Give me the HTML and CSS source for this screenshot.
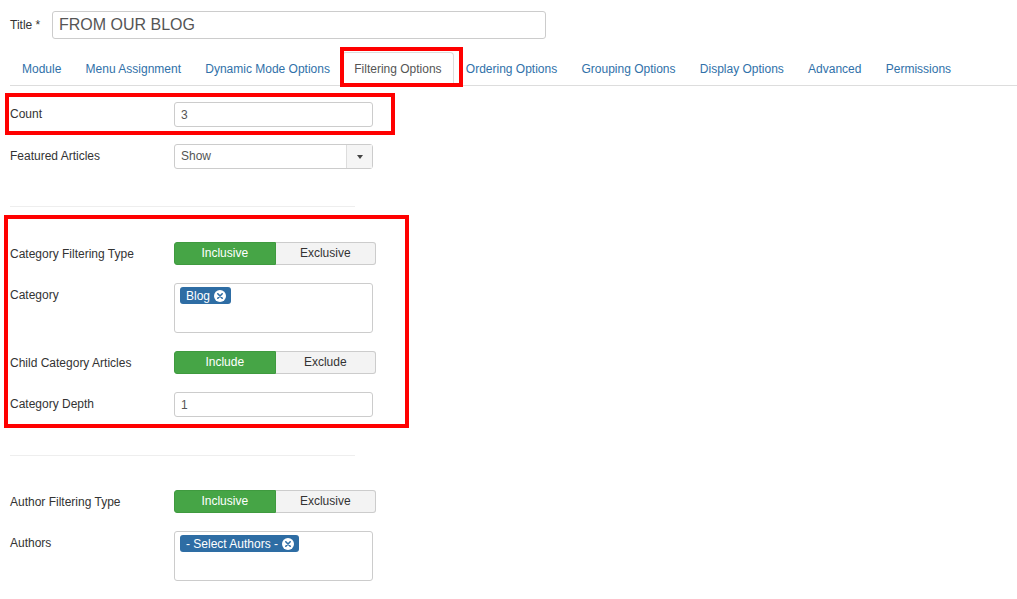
FILE: index.html
```html
<!DOCTYPE html>
<html lang="en">
<head>
    <meta charset="UTF-8">
    <title>Module: Filtering Options</title>
    <link rel="stylesheet" href="styles.css">
</head>
<body>
    <div class="page">
        <div class="title-row">
            <label class="title-label">Title *</label>
            <input class="title-input" type="text" value="FROM OUR BLOG">
        </div>

        <ul class="nav-tabs">
            <li><a href="#">Module</a></li>
            <li><a href="#">Menu Assignment</a></li>
            <li><a href="#">Dynamic Mode Options</a></li>
            <li class="active"><a href="#">Filtering Options</a></li>
            <li><a href="#">Ordering Options</a></li>
            <li><a href="#">Grouping Options</a></li>
            <li><a href="#">Display Options</a></li>
            <li><a href="#">Advanced</a></li>
            <li><a href="#">Permissions</a></li>
        </ul>

        <div class="form">
            <div class="control-group first">
                <div class="control-label">Count</div>
                <input class="text-input" type="text" value="3">
            </div>

            <div class="control-group">
                <div class="control-label">Featured Articles</div>
                <div class="select">
                    <span class="select-value">Show</span>
                    <span class="select-caret"><span class="caret"></span></span>
                </div>
            </div>

            <hr class="spacer">

            <div class="control-group">
                <div class="control-label">Category Filtering Type</div>
                <div class="btn-group">
                    <span class="btn btn-on">Inclusive</span>
                    <span class="btn">Exclusive</span>
                </div>
            </div>

            <div class="control-group">
                <div class="control-label">Category</div>
                <div class="multi">
                    <span class="chip">Blog <span class="chip-close">
                        <svg width="12" height="12" viewBox="0 0 12 12"><circle cx="6" cy="6" r="6" fill="#fff"/><path d="M3.8 3.8 L8.2 8.2 M8.2 3.8 L3.8 8.2" stroke="#2e6da4" stroke-width="1.6" stroke-linecap="round"/></svg>
                    </span></span>
                </div>
            </div>

            <div class="control-group">
                <div class="control-label">Child Category Articles</div>
                <div class="btn-group">
                    <span class="btn btn-on">Include</span>
                    <span class="btn">Exclude</span>
                </div>
            </div>

            <div class="control-group">
                <div class="control-label">Category Depth</div>
                <input class="text-input" type="text" value="1">
            </div>

            <hr class="spacer second">

            <div class="control-group">
                <div class="control-label">Author Filtering Type</div>
                <div class="btn-group">
                    <span class="btn btn-on">Inclusive</span>
                    <span class="btn">Exclusive</span>
                </div>
            </div>

            <div class="control-group">
                <div class="control-label">Authors</div>
                <div class="multi">
                    <span class="chip">- Select Authors - <span class="chip-close">
                        <svg width="12" height="12" viewBox="0 0 12 12"><circle cx="6" cy="6" r="6" fill="#fff"/><path d="M3.8 3.8 L8.2 8.2 M8.2 3.8 L3.8 8.2" stroke="#2e6da4" stroke-width="1.6" stroke-linecap="round"/></svg>
                    </span></span>
                </div>
            </div>
        </div>

        <!-- red annotation boxes drawn over the form -->
        <div class="mark mark-tab"></div>
        <div class="mark mark-count"></div>
        <div class="mark mark-category"></div>
    </div>
</body>
</html>
```

FILE: styles.css
```css
body {
    margin: 0;
    font-family: "Liberation Sans", Arial, sans-serif;
    font-size: 12px;
    color: #333;
    background: #fff;
}
.page {
    position: relative;
    padding: 11px 0 0 10px;
    height: 588px;
    overflow: hidden;
}
.title-row {
    display: flex;
    align-items: center;
}
.title-label {
    width: 42px;
    font-size: 12px;
    color: #333;
}
.title-input {
    box-sizing: border-box;
    width: 494px;
    height: 28px;
    border: 1px solid #ccc;
    border-radius: 3px;
    padding: 0 6px;
    font-family: inherit;
    font-size: 16px;
    color: #555;
}
.nav-tabs {
    display: flex;
    list-style: none;
    margin: 13px 0 0;
    padding: 0;
    border-bottom: 1px solid #ddd;
}
.nav-tabs li {
    margin-bottom: -1px;
    margin-right: 0.25px;
}
.nav-tabs a {
    display: block;
    padding: 6px 11px 5px;
    line-height: 21px;
    border: 1px solid transparent;
    border-radius: 4px 4px 0 0;
    color: #3071a9;
    text-decoration: none;
    font-size: 12px;
}
.nav-tabs .active a {
    color: #555;
    background: #fff;
    border-color: #ddd #ddd transparent;
}
.form {
    padding-top: 16px;
}
.control-group {
    display: flex;
    align-items: flex-start;
    margin-bottom: 18px;
}
.control-group.first {
    margin-bottom: 17px;
}
.control-label {
    width: 164px;
    padding-top: 5px;
    line-height: 14px;
    color: #333;
}
.text-input {
    box-sizing: border-box;
    width: 199px;
    height: 25px;
    border: 1px solid #ccc;
    border-radius: 3px;
    padding: 0 6px;
    font-family: inherit;
    font-size: 12px;
    color: #555;
}
.select {
    box-sizing: border-box;
    display: flex;
    width: 199px;
    height: 25px;
    border: 1px solid #ccc;
    border-radius: 3px;
}
.select-value {
    flex: 1;
    padding-left: 6px;
    line-height: 23px;
    color: #555;
}
.select-caret {
    width: 25px;
    border-left: 1px solid #ddd;
    background: #f5f5f5;
    display: flex;
    align-items: center;
    justify-content: center;
}
.caret {
    width: 0;
    height: 0;
    border-left: 3px solid transparent;
    border-right: 3px solid transparent;
    border-top: 4px solid #444;
}
.spacer {
    width: 345px;
    margin: 37px 0 35px;
    border: 0;
    border-top: 1px solid #eee;
}
.spacer.second {
    margin-top: 38px;
    margin-bottom: 34px;
}
.btn-group {
    display: flex;
    width: 202px;
}
.btn {
    box-sizing: border-box;
    flex: 1;
    height: 23px;
    line-height: 21px;
    text-align: center;
    border: 1px solid #ccc;
    background: #f3f3f3;
    color: #333;
}
.btn:first-child {
    border-radius: 3px 0 0 3px;
}
.btn:last-child {
    border-radius: 0 3px 3px 0;
    border-left: 0;
}
.btn-on {
    background: #46a546;
    border-color: #3f9a3f;
    color: #fff;
}
.multi {
    box-sizing: border-box;
    width: 199px;
    height: 50px;
    border: 1px solid #ccc;
    border-radius: 3px;
    padding: 3px 5px;
}
.chip {
    display: inline-flex;
    align-items: center;
    gap: 4px;
    height: 17px;
    padding: 0 5px 0 6px;
    border-radius: 3px;
    background: #2e6da4;
    color: #fff;
    font-size: 12px;
}
.chip-close {
    display: flex;
}
.mark {
    position: absolute;
    border: 4px solid #f00;
    box-sizing: border-box;
}
.mark-tab {
    left: 340px;
    top: 47px;
    width: 123px;
    height: 40px;
}
.mark-count {
    left: 5px;
    top: 93px;
    width: 390px;
    height: 42px;
}
.mark-category {
    left: 4px;
    top: 215px;
    width: 405px;
    height: 213px;
}
```
